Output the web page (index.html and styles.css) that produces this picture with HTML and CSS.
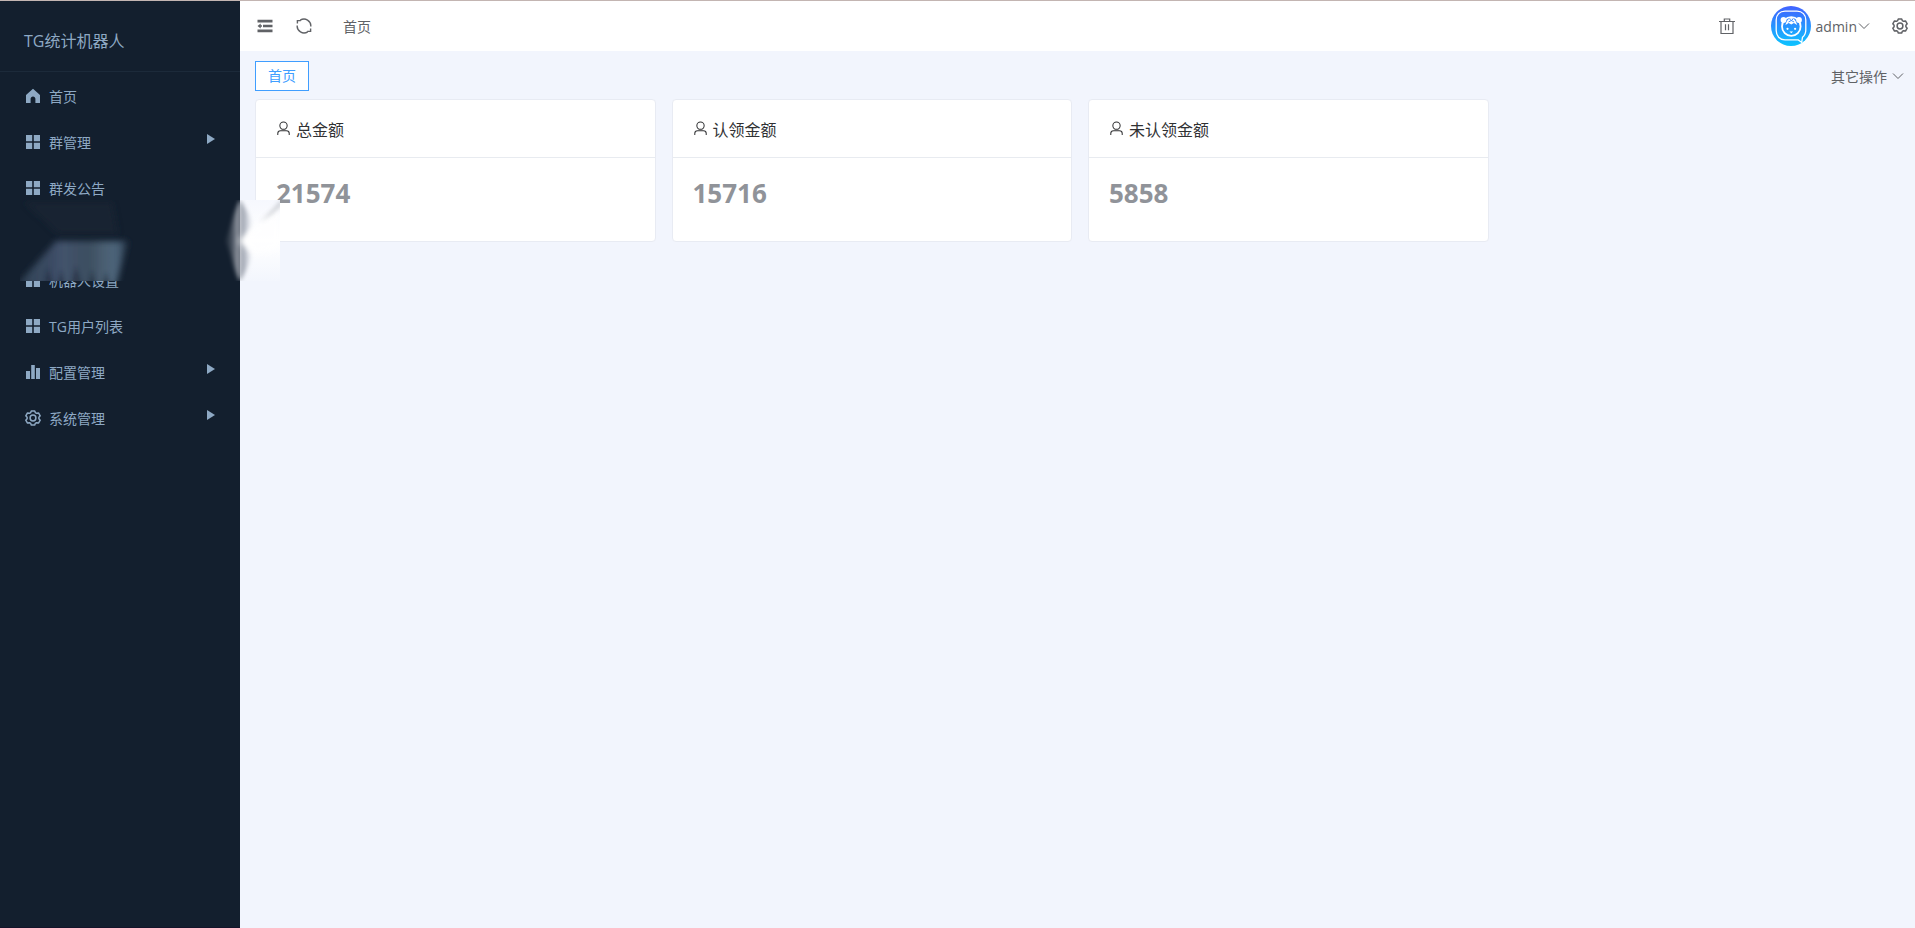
FILE: index.html
```html
<!DOCTYPE html>
<html lang="zh-CN">
<head>
    <meta charset="UTF-8">
    <meta name="viewport" content="width=device-width, initial-scale=1.0">
    <title>TG统计机器人</title>
    <link rel="stylesheet" href="styles.css">
</head>
<body>
    <!-- 公用图标 -->
    <svg class="sprite" aria-hidden="true">
        <symbol id="icon-grid" viewBox="0 0 16 16">
            <path d="M1 1h6.2v6.2H1zM8.8 1H15v6.2H8.8zM1 8.8h6.2V15H1zM8.8 8.8H15V15H8.8z" fill="currentColor"/>
        </symbol>
        <symbol id="icon-user" viewBox="0 0 16 16">
            <g fill="none" stroke="currentColor" stroke-width="1.1">
                <circle cx="8" cy="5" r="3.9"/>
                <path d="M1.9 15v-1.6c0-1.7 1.3-3 3-3h6.2c1.7 0 3 1.3 3 3V15"/>
            </g>
        </symbol>
        <symbol id="icon-gear" viewBox="0 0 16 16">
            <g fill="none" stroke="currentColor" stroke-width="1.5" stroke-linejoin="round">
                <path d="M6.3 .9h3.4l.6 1.7 1.3.7 1.9-.4 1.7 2.9-1.3 1.4v1.6l1.3 1.4-1.7 2.9-1.9-.4-1.3.7-.6 1.7H6.3l-.6-1.7-1.3-.7-1.9.4L.8 10.2l1.3-1.4V7.2L.8 5.8l1.7-2.9 1.9.4 1.3-.7z"/>
                <circle cx="8" cy="8" r="2.9"/>
            </g>
        </symbol>
        <symbol id="icon-down" viewBox="0 0 12 12">
            <path d="M1 3.5l5 5 5-5" fill="none" stroke="currentColor"/>
        </symbol>
    </svg>

    <div class="app">
        <!-- 侧边栏 -->
        <aside class="sidebar">
            <div class="brand">TG统计机器人</div>
            <nav class="menu">
                <a class="menu-item" href="#">
                    <svg class="menu-icon" viewBox="0 0 16 16"><path d="M8 .8L1 7v8h4.6v-4.2c0-1.4 1-2.4 2.4-2.4s2.4 1 2.4 2.4V15H15V7z" fill="currentColor"/></svg>
                    <span>首页</span>
                </a>
                <a class="menu-item" href="#">
                    <svg class="menu-icon"><use href="#icon-grid"/></svg>
                    <span>群管理</span>
                    <i class="arrow"></i>
                </a>
                <a class="menu-item" href="#">
                    <svg class="menu-icon"><use href="#icon-grid"/></svg>
                    <span>群发公告</span>
                </a>
                <div class="menu-item"></div>
                <a class="menu-item" href="#">
                    <svg class="menu-icon"><use href="#icon-grid"/></svg>
                    <span>机器人设置</span>
                </a>
                <a class="menu-item" href="#">
                    <svg class="menu-icon"><use href="#icon-grid"/></svg>
                    <span>TG用户列表</span>
                </a>
                <a class="menu-item" href="#">
                    <svg class="menu-icon" viewBox="0 0 16 16"><path d="M1 7h4v8H1zM6.2 1h3.6v14H6.2zM11 4h4v11h-4z" fill="currentColor"/></svg>
                    <span>配置管理</span>
                    <i class="arrow"></i>
                </a>
                <a class="menu-item" href="#">
                    <svg class="menu-icon"><use href="#icon-gear"/></svg>
                    <span>系统管理</span>
                    <i class="arrow"></i>
                </a>
            </nav>
        </aside>

        <div class="page">
            <!-- 顶栏 -->
            <header class="topbar">
                <button class="icon-btn" type="button" aria-label="折叠菜单">
                    <svg class="icon" viewBox="0 0 16 16"><path d="M.5 1.8h15v2.6H.5zM6 6.8h9.5v2.4H6zM.5 11.6h15v2.6H.5zM.5 8l3.2-2.4v1.6H5v1.6H3.7v1.6z" fill="currentColor"/></svg>
                </button>
                <button class="icon-btn" type="button" aria-label="刷新">
                    <svg class="icon" viewBox="0 0 16 16"><g fill="none" stroke="currentColor" stroke-width="1.4"><path d="M4.3 2.2A6.8 6.8 0 0 1 14.8 8.5M11.7 13.8A6.8 6.8 0 0 1 1.2 7.5M1.4 5.4V2.6h3.4M14.6 10.600v2.800h-3.400"/></g></svg>
                </button>
                <a class="crumb" href="#">首页</a>
                <div class="tools">
                    <button class="icon-btn" type="button" aria-label="清除缓存">
                        <svg class="icon" viewBox="0 0 16 16"><g fill="none" stroke="currentColor" stroke-width="1.2"><path d="M0 3.5h16M5.3 3.3V1h5.4v2.3M2 3.5v12h12v-12M6.5 6.3v6M9.5 6.3v6"/></g></svg>
                    </button>
                    <button class="user" type="button">
                        <svg class="avatar" viewBox="0 0 40 40">
                            <defs>
                                <linearGradient id="avatar-bg" x1="0" y1="0" x2="0" y2="1">
                                    <stop offset="0" stop-color="#4262ff"/>
                                    <stop offset="1" stop-color="#0cc4ff"/>
                                </linearGradient>
                            </defs>
                            <circle cx="20" cy="20" r="20" fill="url(#avatar-bg)"/>
                            <path d="M14 5.2h12c5.3 0 8.8 3.5 8.8 8.8v10c0 3-1.2 5.6-3.3 7.2l-.8 5.2-3.4-2.5H14c-5.3 0-8.8-4-8.8-9.3V14c0-5.3 3.5-8.8 8.8-8.8z" fill="none" stroke="#fff" stroke-width="1.3"/>
                            <circle cx="12.5" cy="14" r="2.9" fill="#fff"/>
                            <circle cx="28" cy="14" r="2.9" fill="#fff"/>
                            <circle cx="20.3" cy="20.5" r="9.3" fill="none" stroke="#fff" stroke-width="1.8"/>
                            <path d="M14.5 19c1-4 3-7 5.8-7s4.8 3 5.8 7l-3.2-2-2.6 1.5-2.6-1.5z" fill="#fff"/>
                            <path d="M18.5 13l1.8 1.5 1.8-1.5M17.5 16l2.8-1.5 2.8 1.5" fill="none" stroke="#3287ff" stroke-width=".9"/>
                            <circle cx="16.5" cy="22.8" r="1.1" fill="#fff"/>
                            <circle cx="24.1" cy="22.8" r="1.1" fill="#fff"/>
                            <path d="M18.5 25.5h3.6l-1.8 1.7z" fill="#fff"/>
                        </svg>
                        <span>admin</span>
                        <svg class="down"><use href="#icon-down"/></svg>
                    </button>
                    <button class="icon-btn" type="button" aria-label="设置">
                        <svg class="icon"><use href="#icon-gear"/></svg>
                    </button>
                </div>
            </header>

            <!-- 标签栏 -->
            <div class="tabs">
                <a class="tab" href="#">首页</a>
                <button class="more" type="button">
                    <span>其它操作</span>
                    <svg class="down"><use href="#icon-down"/></svg>
                </button>
            </div>

            <main class="cards">
                <section class="card">
                    <h2 class="card-title"><svg class="card-icon"><use href="#icon-user"/></svg>总金额</h2>
                    <p class="card-value">21574</p>
                </section>
                <section class="card">
                    <h2 class="card-title"><svg class="card-icon"><use href="#icon-user"/></svg>认领金额</h2>
                    <p class="card-value">15716</p>
                </section>
                <section class="card">
                    <h2 class="card-title"><svg class="card-icon"><use href="#icon-user"/></svg>未认领金额</h2>
                    <p class="card-value">5858</p>
                </section>
            </main>
        </div>

        <!-- 模糊遮罩 -->
        <svg class="smudge" viewBox="0 0 260 81" aria-hidden="true">
            <defs>
                <filter id="soft" x="-30%" y="-30%" width="160%" height="160%"><feGaussianBlur stdDeviation="3"/></filter>
                <filter id="fine" x="-30%" y="-30%" width="160%" height="160%"><feGaussianBlur stdDeviation="2"/></filter>
                <linearGradient id="streaks" gradientUnits="userSpaceOnUse" x1="0" y1="0" x2="108" y2="0">
                    <stop offset="0" stop-color="#2b3b4e"/>
                    <stop offset=".1" stop-color="#35465b"/>
                    <stop offset=".28" stop-color="#3a4a62"/>
                    <stop offset=".4" stop-color="#43536d"/>
                    <stop offset=".5" stop-color="#3f5065"/>
                    <stop offset=".65" stop-color="#3d4f61"/>
                    <stop offset=".8" stop-color="#4c6175"/>
                    <stop offset=".9" stop-color="#4c6379"/>
                    <stop offset="1" stop-color="#1f2f40"/>
                </linearGradient>
                <linearGradient id="edge" gradientUnits="userSpaceOnUse" x1="202" y1="0" x2="220" y2="0">
                    <stop offset="0" stop-color="#8b919b" stop-opacity="0"/>
                    <stop offset=".5" stop-color="#8b919b" stop-opacity=".35"/>
                    <stop offset="1" stop-color="#b3b8c0"/>
                </linearGradient>
                <linearGradient id="shade" gradientUnits="userSpaceOnUse" x1="220" y1="0" x2="235" y2="0">
                    <stop offset="0" stop-color="#8d939e"/>
                    <stop offset=".4" stop-color="#bcc1cc"/>
                    <stop offset="1" stop-color="#f4f6fd" stop-opacity="0"/>
                </linearGradient>
                <linearGradient id="pale" x1="0" y1="0" x2="0" y2="1">
                    <stop offset="0" stop-color="#f6f8fe"/>
                    <stop offset=".5" stop-color="#fff"/>
                    <stop offset="1" stop-color="#f3f6fd"/>
                </linearGradient>
            </defs>
            <path d="M0 0h220v81H0z" fill="#131f2e"/>
            <path d="M4 2h88l6 32H38z" fill="#1a2735" opacity=".6" filter="url(#soft)"/>
            <path d="M36 41h72L96 86H-4z" fill="url(#streaks)" filter="url(#soft)"/>
            <g fill="#131f2e" opacity=".4" filter="url(#fine)">
                <path d="M24 84l4-16 5 16zM37 84l4-14 4 14zM51 84l5-18 6 18zM68 84l4-14 4 14zM82 84l4-12 4 12z"/>
            </g>
            <path d="M220 0h40v81h-40z" fill="url(#pale)"/>
            <path d="M220 0c-4 8-6 15-9 25l-5 16 5 14c3 11 5 19 9 26z" fill="url(#edge)" filter="url(#fine)"/>
            <path d="M220 0c5 8 12 18 12 26l-10 15 9 12c0 8-6 20-11 28z" fill="url(#shade)" filter="url(#fine)"/>
            <path d="M218 41l16-14 26-22v46l-26 4z" fill="#fff" opacity=".7" filter="url(#soft)"/>
            <path d="M262 -1l-10 11-12 12 12-8 10-9z" fill="#8f949e" opacity=".45" filter="url(#fine)"/>
        </svg>
    </div>
</body>
</html>
```
FILE: styles.css
```css
* {
    margin: 0;
    padding: 0;
    box-sizing: border-box;
}

body {
    font-family: "Open Sans", "Noto Sans CJK SC", sans-serif;
    font-size: 14px;
    color: #606266;
    background: #f2f5fd;
}

a {
    color: inherit;
    text-decoration: none;
}

button {
    font: inherit;
    color: inherit;
    background: none;
    border: none;
    cursor: pointer;
}

.sprite {
    position: absolute;
    width: 0;
    height: 0;
}

.app {
    position: relative;
    display: flex;
    min-height: 100vh;
    border-top: 1px solid #c3b5b2;
}

/* 侧边栏 */
.sidebar {
    flex: none;
    width: 240px;
    background: #131f2e;
    border-bottom: 1px solid #14142a;
    color: #8ea9c4;
}

.brand {
    height: 71px;
    padding: 9px 24px 0;
    line-height: 62px;
    font-size: 16px;
    border-bottom: 1px solid #1c2a3a;
}

.menu {
    padding-top: 1px;
}

.menu-item {
    display: flex;
    align-items: center;
    height: 46px;
    padding: 0 25px;
    gap: 8px;
}

.menu-icon {
    width: 16px;
    height: 16px;
}

.arrow {
    margin: 0 0 6px auto;
    border: 5px solid transparent;
    border-left: 8px solid #8ea9c4;
    border-right: none;
}

/* 右侧区域 */
.page {
    flex: 1;
    min-width: 0;
}

.topbar {
    display: flex;
    align-items: center;
    height: 50px;
    padding: 0 7px 0 17px;
    gap: 23px;
    background: #fff;
}

.icon-btn {
    display: flex;
}

.icon {
    width: 16px;
    height: 16px;
}

.crumb {
    margin-left: 8px;
}

.tools {
    display: flex;
    align-items: center;
    margin-left: auto;
    gap: 22px;
}

.user {
    display: flex;
    align-items: center;
    margin-left: 14px;
}

.user span {
    margin: 0 1px 0 5px;
}

.avatar {
    width: 40px;
    height: 40px;
}

.down {
    width: 12px;
    height: 12px;
}

.tabs {
    display: flex;
    align-items: center;
    justify-content: space-between;
    padding: 10px 11px 8px 15px;
}

.tab {
    padding: 0 12px;
    line-height: 28px;
    color: #409eff;
    background: #fff;
    border: 1px solid #409eff;
}

.more {
    display: flex;
    align-items: center;
    gap: 5px;
}

/* 统计卡片 */
.cards {
    display: grid;
    grid-template-columns: repeat(4, minmax(0, 1fr));
    gap: 16px;
    padding: 0 10px 16px 15px;
}

.card {
    background: #fff;
    border: 1px solid #e8ebf3;
    border-radius: 4px;
}

.card-title {
    display: flex;
    align-items: center;
    height: 58px;
    padding: 0 20px;
    gap: 5px;
    font-size: 16px;
    font-weight: 400;
    color: #303133;
    border-bottom: 1px solid #e8ebf0;
}

.card-icon {
    width: 15px;
    height: 15px;
}

.card-value {
    padding: 17px 20px 30px;
    line-height: 36px;
    font-size: 26px;
    font-weight: 700;
    color: #909399;
}

/* 盖在菜单与卡片之上 */
.smudge {
    position: absolute;
    top: 199px;
    left: 20px;
    width: 260px;
    height: 81px;
    overflow: hidden;
    pointer-events: none;
}
```
